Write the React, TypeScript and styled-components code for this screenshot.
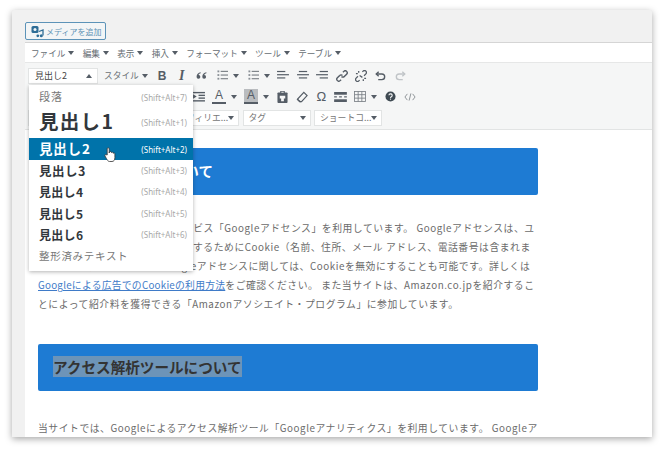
import React from "react";
import styled, {createGlobalStyle} from "styled-components";

const GlobalStyle = createGlobalStyle`
    html, body {
        margin: 0;
        padding: 0;
        background: #fff;
    }
    body {
        font-family: "Noto Sans CJK JP", "Noto Sans", sans-serif;
    }
`

const Page = styled.div`
    width: 664px;
    height: 451px;
    padding: 10px 12px 14px;
    box-sizing: border-box;
    overflow: hidden;
`

const Window = styled.div`
    width: 640px;
    height: 427px;
    background: #f1f1f1;
    border-radius: 2px 2px 0 0;
    box-shadow: 0 2px 7px rgba(0, 0, 0, 0.35);
    overflow: hidden;
    padding-left: 13px;
    box-sizing: border-box;
    display: flex;
    flex-direction: column;
`

const MediaBar = styled.div`
    height: 30px;
    flex: none;
    display: flex;
    align-items: flex-end;
    padding-bottom: 2px;
`

const MediaButton = styled.button`
    width: 81px;
    height: 18px;
    padding: 0 0 0 5px;
    display: flex;
    align-items: center;
    gap: 2px;
    border: 1px solid #5c93b8;
    border-radius: 2px;
    background: #f3f5f6;
    color: #5f93b5;
    font-family: inherit;
    font-size: 8px;
    white-space: nowrap;
    box-sizing: border-box;

    svg {
        flex: none;
    }
`

const Editor = styled.div`
    flex: 1;
    background: #fff;
    display: flex;
    flex-direction: column;
    border-top: 1px solid #d5d5d5;
    min-height: 0;
`

const MenuBar = styled.div`
    height: 19px;
    flex: none;
    display: flex;
    align-items: center;
    padding-left: 6px;
    gap: 8.3px;
    background: #fff;
    border-bottom: 1px solid #e6e7e7;
`

const MenuItem = styled.span`
    font-size: 8.6px;
    color: #666d73;
    white-space: nowrap;
    display: flex;
    align-items: center;
    gap: 3px;
`

const Caret = styled.i<{ $up?: boolean }>`
    display: inline-block;
    width: 0;
    height: 0;
    flex: none;
    border-left: 3px solid transparent;
    border-right: 3px solid transparent;
    ${props => props.$up
        ? `border-bottom: 4px solid #555d66;`
        : `border-top: 4px solid #555d66;`}
`

const Toolbar = styled.div`
    flex: none;
    height: 67px;
    background: #f5f6f6;
    border-bottom: 1px solid #e2e4e4;
    padding: 2px 0 0 3px;
    box-sizing: border-box;
    display: flex;
    flex-direction: column;
    position: relative;
`

const ToolRow = styled.div<{ $indent?: number }>`
    height: 21px;
    flex: none;
    display: flex;
    align-items: center;
    padding-left: ${props => props.$indent || 0}px;
`

const ToolButton = styled.span<{ $w?: number, $faded?: boolean }>`
    width: ${props => props.$w || 19.5}px;
    flex: none;
    height: 18px;
    display: flex;
    align-items: center;
    justify-content: center;
    gap: 5px;
    color: ${props => props.$faded ? "#c0c4c7" : "#555d66"};

    svg {
        display: block;
        flex: none;
    }
`

const FormatSelect = styled.div`
    width: 70px;
    height: 16px;
    flex: none;
    background: #fff;
    border: 1px solid #e2e4e4;
    box-sizing: border-box;
    display: flex;
    align-items: center;
    justify-content: space-between;
    padding: 0 5px 0 6px;
    font-size: 9px;
    color: #444;
`

const StyleButton = styled.div`
    width: 54px;
    flex: none;
    padding-left: 6px;
    box-sizing: border-box;
    display: flex;
    align-items: center;
    gap: 3px;
    font-size: 8.7px;
    color: #6a7177;
    white-space: nowrap;
`

const ListBox = styled.div`
    width: 68px;
    height: 16px;
    flex: none;
    margin-right: 3.5px;
    background: #fff;
    border: 1px solid #e2e4e4;
    box-sizing: border-box;
    display: flex;
    align-items: center;
    justify-content: space-between;
    padding: 0 4px 0 5px;
    font-size: 8.8px;
    color: #777;
    white-space: nowrap;
`

const LetterIcon = styled.span<{ $shade?: boolean }>`
    font-family: "Liberation Sans", sans-serif;
    font-size: 12px;
    line-height: 13px;
    width: 14px;
    text-align: center;
    border-bottom: 2px solid #555d66;
    background: ${props => props.$shade ? "#b9bcbf" : "transparent"};
    color: #555d66;
`

const BoldGlyph = styled.b`
    font-family: "Liberation Sans", sans-serif;
    font-size: 12px;
`

const ItalicGlyph = styled.b`
    font-family: "Liberation Serif", serif;
    font-style: italic;
    font-size: 14px;
`

const OmegaGlyph = styled.span`
    font-family: "Liberation Sans", sans-serif;
    font-size: 13px;
`

const FormatMenu = styled.div`
    position: absolute;
    left: 4px;
    top: 22px;
    width: 164px;
    height: 186px;
    padding-top: 2px;
    box-sizing: border-box;
    background: #fff;
    box-shadow: 0 1px 4px rgba(0, 0, 0, 0.3);
    display: flex;
    flex-direction: column;
    z-index: 3;
`

const FormatItem = styled.div<{ $h: number, $active?: boolean }>`
    height: ${props => props.$h}px;
    flex: none;
    display: flex;
    align-items: center;
    justify-content: space-between;
    padding: 0 6px 0 10px;
    box-sizing: border-box;
    background: ${props => props.$active ? "#0073aa" : "transparent"};
    color: ${props => props.$active ? "#fff" : "#32373c"};
`

const FormatLabel = styled.span<{ $size: number, $bold?: boolean, $muted?: boolean, $track?: number, $lift?: number }>`
    font-size: ${props => props.$size}px;
    font-weight: ${props => props.$bold ? 700 : 400};
    letter-spacing: ${props => props.$track || 0}px;
    color: ${props => props.$muted ? "#777" : "inherit"};
    margin-bottom: ${props => props.$lift || 0}px;
    white-space: nowrap;
`

const Shortcut = styled.span<{ $active?: boolean }>`
    font-family: "Noto Sans", sans-serif;
    font-size: 8px;
    color: ${props => props.$active ? "#fff" : "#a8a8a8"};
    white-space: nowrap;
`

const PointerHand = styled.svg`
    position: absolute;
    left: 79px;
    top: 84px;
    z-index: 4;
`

const Content = styled.div`
    flex: 1;
    min-height: 0;
    overflow: hidden;
    padding: 18px 0 0 13px;
    background: #fff;
`

const Heading = styled.h2`
    width: 500px;
    height: 47px;
    margin: 0;
    padding: 0 15px 2px;
    box-sizing: border-box;
    display: flex;
    align-items: center;
    background: #1e7bd3;
    border-radius: 2px;
    color: #fff;
    font-size: 14.6px;
    font-weight: 700;
    white-space: nowrap;
`

const SelectedText = styled.span`
    background: #6d94b8;
    color: #333;
`

const Paragraph = styled.p<{ $top: number }>`
    width: 510px;
    margin: ${props => props.$top}px 0 30px;
    font-size: 9.8px;
    line-height: 19px;
    letter-spacing: 0.55px;
    color: #6b6b6b;
    white-space: nowrap;

    a {
        color: #3f7bc8;
        text-decoration: underline;
        letter-spacing: 0.25px;
    }
`

const ICON = "#555d66";

const MediaIcon = () => (
    <svg width="13" height="13" viewBox="0 0 13 13">
        <rect x="0.5" y="1" width="7" height="7" rx="1.5" fill="#2f6d96"/>
        <circle cx="4" cy="4.5" r="1.5" fill="#f3f5f6"/>
        <path d="M8 6.5 L12 5 V10.5" stroke="#2f6d96" strokeWidth="1.3" fill="none"/>
        <circle cx="10.3" cy="10.7" r="1.5" fill="#2f6d96"/>
        <circle cx="6.8" cy="10.8" r="1.4" fill="#2f6d96"/>
    </svg>
)

const Lines = ({rows}: { rows: number[][] }) => (
    <svg width="12" height="11" viewBox="0 0 13 12">
        {rows.map((r, i) => (
            <rect key={i} x={r[0]} y={r[1]} width={r[2]} height="1.3" fill={ICON}/>
        ))}
    </svg>
)

const QuoteIcon = () => (
    <svg width="13" height="9" viewBox="0 0 14 11">
        <path d="M6 1.5 C3 2 1 4 1 7 a2.3 2.3 0 1 0 2.4 -2.1 C3.8 3.8 4.8 3.1 6 2.8 Z" fill={ICON}/>
        <path d="M13 1.5 C10 2 8 4 8 7 a2.3 2.3 0 1 0 2.4 -2.1 C10.8 3.8 11.8 3.1 13 2.8 Z" fill={ICON}/>
    </svg>
)

const ListIcon = () => (
    <svg width="11" height="11" viewBox="0 0 12 12">
        {[1.5, 5.5, 9.5].map(y => (
            <g key={y}>
                <rect x="0.5" y={y - 1} width="2" height="2" fill="#8a9096"/>
                <rect x="4" y={y - 0.6} width="8" height="1.2" fill="#777d83"/>
            </g>
        ))}
    </svg>
)

const LinkIcon = () => (
    <svg width="12" height="12" viewBox="0 0 13 13" fill="none" stroke={ICON} strokeWidth="1.5">
        <path d="M7.5 2.5 l1-1 a2 2 0 0 1 3 3 l-2.500 2.500 a2 2 0 0 1-3 0"/>
        <path d="M5.500 10.500 l-1 1 a2 2 0 0 1-3-3 l2.500-2.500 a2 2 0 0 1 3 0"/>
    </svg>
)

const UnlinkIcon = () => (
    <svg width="12" height="12" viewBox="0 0 13 13" fill="none" stroke={ICON} strokeWidth="1.4">
        <path d="M8 2 l.8-.8 a2 2 0 0 1 3 3 l-2 2"/>
        <path d="M5 11 l-.8.8 a2 2 0 0 1-3-3 l2-2"/>
        <path d="M4 1 v2 M1 4 h2 M9 12 v-2 M12 9 h-2 M5 6 l3 2"/>
    </svg>
)

const UndoIcon = ({flip, color}: { flip?: boolean, color: string }) => (
    <svg width="11" height="10" viewBox="0 0 12 11" fill="none" stroke={color} strokeWidth="1.5"
         style={flip ? {transform: "scaleX(-1)"} : undefined}>
        <path d="M4 0.800 L1.300 3.300 L4 5.800"/>
        <path d="M1.500 3.300 H7.500 a3 3 0 0 1 0 6.200 H3.500"/>
    </svg>
)

const IndentIcon = () => (
    <svg width="12" height="11" viewBox="0 0 13 12">
        <rect x="0" y="1" width="13" height="1.500" fill={ICON}/>
        <rect x="6" y="4" width="7" height="1.500" fill={ICON}/>
        <rect x="6" y="7" width="7" height="1.500" fill={ICON}/>
        <rect x="0" y="10" width="13" height="1.500" fill={ICON}/>
        <path d="M0 3.500 L4 6 L0 8.500Z" fill={ICON}/>
    </svg>
)

const PasteIcon = () => (
    <svg width="11" height="12" viewBox="0 0 12 13">
        <rect x="0.500" y="1.500" width="11" height="11.500" rx="1" fill={ICON}/>
        <rect x="3.500" y="0" width="5" height="3" fill={ICON}/>
        <rect x="4.700" y="0.800" width="2.600" height="1" fill="#f5f6f6"/>
        <path d="M3 5 h6 v3 h-1.500 v3 h-3 v-3 h-1.500Z" fill="#f5f6f6"/>
    </svg>
)

const EraserIcon = () => (
    <svg width="12" height="12" viewBox="0 0 13 13" fill="none" stroke={ICON} strokeWidth="1.300">
        <path d="M8.500 1.500 L12 5 L6 11.500 H4 L1.500 9Z"/>
        <path d="M1.500 9 L5 12"/>
    </svg>
)

const BreakIcon = () => (
    <svg width="13" height="10" viewBox="0 0 14 11">
        <rect x="0" y="0" width="14" height="3" fill={ICON}/>
        <rect x="0" y="4.700" width="3" height="1.300" fill={ICON}/>
        <rect x="5.500" y="4.700" width="3" height="1.300" fill={ICON}/>
        <rect x="11" y="4.700" width="3" height="1.300" fill={ICON}/>
        <rect x="0" y="8" width="14" height="3" fill={ICON}/>
    </svg>
)

const TableIcon = () => (
    <svg width="12" height="11" viewBox="0 0 13 12" fill="none" stroke="#777d83" strokeWidth="0.900">
        <rect x="0.500" y="0.500" width="12" height="11"/>
        <path d="M0.500 4 H12.500 M0.500 7.800 H12.500 M4.500 0.500 V11.500 M8.500 0.500 V11.500"/>
    </svg>
)

const HelpIcon = () => (
    <svg width="11" height="11" viewBox="0 0 12 12">
        <circle cx="6" cy="6" r="5.500" fill="#3f4a52"/>
        <path d="M4.300 4.700 a1.800 1.600 0 1 1 2.600 1.500 c-.6.400-.9.600-.9 1.300" fill="none" stroke="#f5f6f6" strokeWidth="1.200"/>
        <rect x="5.400" y="8.300" width="1.200" height="1.200" fill="#f5f6f6"/>
    </svg>
)

const CodeIcon = () => (
    <svg width="12" height="8" viewBox="0 0 13 9" fill="none" stroke="#777d83" strokeWidth="0.900">
        <path d="M3.500 1 L0.800 4.500 L3.500 8 M9.500 1 L12.200 4.500 L9.500 8 M7.500 0.500 L5.500 8.500"/>
    </svg>
)

const formats = [
    {label: "段落", h: 20, size: 11, muted: true, track: 1, lift: 2, key: "Shift+Alt+7"},
    {label: "見出し1", h: 31, size: 19.500, bold: true, track: 1.300, lift: 4, key: "Shift+Alt+1"},
    {label: "見出し2", h: 22, size: 13.500, bold: true, track: 0.800, lift: 3, active: true, key: "Shift+Alt+2"},
    {label: "見出し3", h: 21, size: 12.500, bold: true, track: 0.500, key: "Shift+Alt+3"},
    {label: "見出し4", h: 21.500, size: 12, bold: true, track: 0.300, key: "Shift+Alt+4"},
    {label: "見出し5", h: 21.500, size: 12, bold: true, track: 0.300, key: "Shift+Alt+5"},
    {label: "見出し6", h: 21, size: 12, bold: true, track: 0.300, key: "Shift+Alt+6"},
    {label: "整形済みテキスト", h: 21, size: 10.500, muted: true, track: 0.700},
]

const menus = ["ファイル", "編集", "表示", "挿入", "フォーマット", "ツール", "テーブル"];

const App = () => {
    return (
        <Page>
            <GlobalStyle/>
            <Window>
                <MediaBar>
                    <MediaButton><MediaIcon/>メディアを追加</MediaButton>
                </MediaBar>
                <Editor>
                    <MenuBar>
                        {menus.map(m => <MenuItem key={m}>{m}<Caret/></MenuItem>)}
                    </MenuBar>
                    <Toolbar>
                        <ToolRow>
                            <FormatSelect>見出し2<Caret $up/></FormatSelect>
                            <StyleButton>スタイル<Caret/></StyleButton>
                            <ToolButton $w={20}><BoldGlyph>B</BoldGlyph></ToolButton>
                            <ToolButton><ItalicGlyph>I</ItalicGlyph></ToolButton>
                            <ToolButton $w={20}><QuoteIcon/></ToolButton>
                            <ToolButton $w={32}><ListIcon/><Caret/></ToolButton>
                            <ToolButton $w={30}><ListIcon/><Caret/></ToolButton>
                            <ToolButton><Lines rows={[[0, 1, 9], [0, 4.500, 13], [0, 8, 9]]}/></ToolButton>
                            <ToolButton><Lines rows={[[2, 1, 9], [0, 4.500, 13], [2, 8, 9]]}/></ToolButton>
                            <ToolButton><Lines rows={[[4, 1, 9], [0, 4.500, 13], [4, 8, 9]]}/></ToolButton>
                            <ToolButton><LinkIcon/></ToolButton>
                            <ToolButton><UnlinkIcon/></ToolButton>
                            <ToolButton><UndoIcon color={ICON}/></ToolButton>
                            <ToolButton $faded><UndoIcon flip color="#c0c4c7"/></ToolButton>
                        </ToolRow>
                        <ToolRow $indent={161}>
                            <ToolButton><IndentIcon/></ToolButton>
                            <ToolButton $w={32}><LetterIcon>A</LetterIcon><Caret/></ToolButton>
                            <ToolButton $w={32}><LetterIcon $shade>A</LetterIcon><Caret/></ToolButton>
                            <ToolButton><PasteIcon/></ToolButton>
                            <ToolButton><EraserIcon/></ToolButton>
                            <ToolButton><OmegaGlyph>Ω</OmegaGlyph></ToolButton>
                            <ToolButton><BreakIcon/></ToolButton>
                            <ToolButton $w={30}><TableIcon/><Caret/></ToolButton>
                            <ToolButton><HelpIcon/></ToolButton>
                            <ToolButton><CodeIcon/></ToolButton>
                        </ToolRow>
                        <ToolRow>
                            <ListBox>フォント<Caret/></ListBox>
                            <ListBox>サイズ<Caret/></ListBox>
                            <ListBox>アフィリエ...<Caret/></ListBox>
                            <ListBox>タグ<Caret/></ListBox>
                            <ListBox>ショートコ...<Caret/></ListBox>
                        </ToolRow>
                        <FormatMenu>
                            {formats.map(f => (
                                <FormatItem key={f.label} $h={f.h} $active={f.active}>
                                    <FormatLabel $size={f.size} $bold={f.bold} $muted={f.muted} $track={f.track} $lift={f.lift}>{f.label}</FormatLabel>
                                    {f.key && <Shortcut $active={f.active}>({f.key})</Shortcut>}
                                </FormatItem>
                            ))}
                        </FormatMenu>
                        <PointerHand width="12" height="15" viewBox="0 0 12 15">
                            <path d="M3.200 8 V1.800 a1 1 0 0 1 2 0 V6 l.2-1 a1 1 0 0 1 1.800 0 l.2.600 a1 1 0 0 1 1.700.200 l.1.500 a1 1 0 0 1 1.700.500 V10.500 C10.900 13 9.800 14.500 8 14.500 H5.500 C4 14.500 3.300 13 2.400 11.500 L1 9 C.5 8 1.700 7 2.500 7.800 Z"
                                  fill="#fff" stroke="#333" strokeWidth="0.800"/>
                        </PointerHand>
                    </Toolbar>
                    <Content>
                        <Heading>当サイトの広告について</Heading>
                        <Paragraph $top={24}>
                            当サイトでは、第三者の広告サービス「Googleアドセンス」を利用しています。 Googleアドセンスは、ユ<br/>
                            ーザーの興味に応じた広告を表示するためにCookie（名前、住所、メール アドレス、電話番号は含まれま<br/>
                            せん）を使用します。なおGoogleアドセンスに関しては、Cookieを無効にすることも可能です。詳しくは<br/>
                            <a href="#ads">Googleによる広告でのCookieの利用方法</a>をご確認ください。 また当サイトは、Amazon.co.jpを紹介するこ<br/>
                            とによって紹介料を獲得できる「Amazonアソシエイト・プログラム」に参加しています。
                        </Paragraph>
                        <Heading><SelectedText>アクセス解析ツールについて</SelectedText></Heading>
                        <Paragraph $top={28}>
                            当サイトでは、Googleによるアクセス解析ツール「Googleアナリティクス」を利用しています。 Googleア
                        </Paragraph>
                    </Content>
                </Editor>
            </Window>
        </Page>
    )
}

export default App;
